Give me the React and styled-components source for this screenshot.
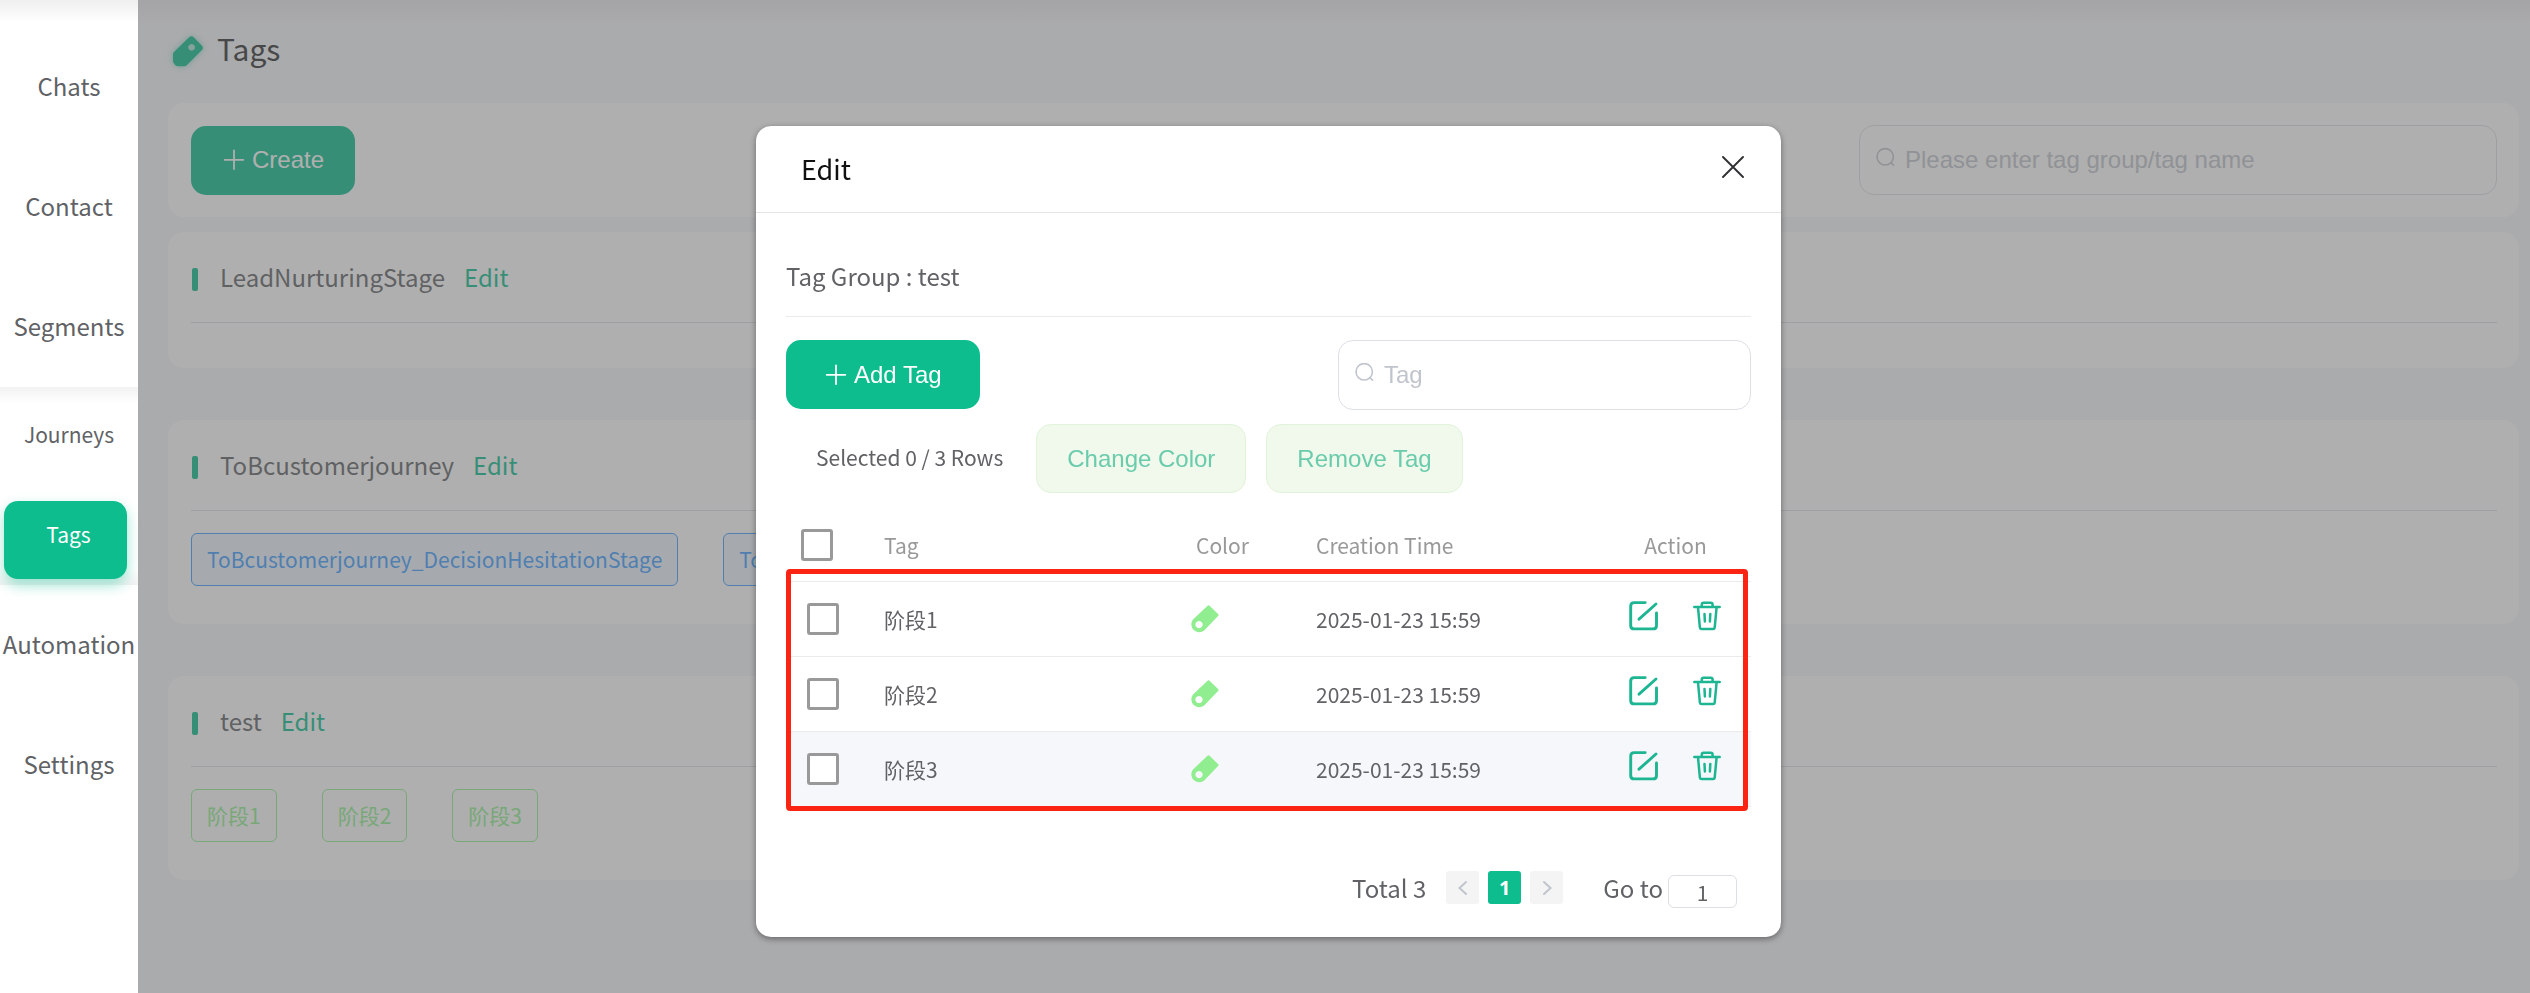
import React from 'react';
import styled, { createGlobalStyle, css } from 'styled-components';

const GREEN = '#0dbd8e';
const INK = '#606266';
const SANS = '"Noto Sans CJK SC", sans-serif';
const ARIAL = '"Liberation Sans", Arial, sans-serif';

const GlobalStyle = createGlobalStyle`
  *, *::before, *::after { box-sizing: border-box; }
  body { margin: 0; background: #f5f6fa; color: ${INK}; font-family: ${SANS}; font-size: 24px; line-height: 36px; }
  button, input { font: inherit; color: inherit; margin: 0; }
  button { cursor: pointer; border: 0; background: none; padding: 0; }
  a { color: inherit; text-decoration: none; }
  h1, h2, h3, p { margin: 0; font-size: inherit; font-weight: 400; }
  svg { display: block; flex: none; }
`;

const Page = styled.div`
  display: flex;
  min-height: 100vh;
`;

const Sidebar = styled.nav`
  position: relative;
  z-index: 20;
  flex: none;
  width: 138px;
  padding-top: 27px;
  background: linear-gradient(#efefef, #fff 22px) #fff;
`;

const NavLink = styled.a`
  display: flex;
  align-items: center;
  justify-content: center;
  height: 120px;
  padding-bottom: 2px;
`;

const SubMenu = styled.div`
  height: 198px;
  font-size: 21px;
  background: linear-gradient(#f2f2f2, transparent 16px), linear-gradient(transparent 182px, #f2f2f2);
`;

const SubItem = styled.div`
  height: 99px;
  padding: ${(p) => (p.$active ? '15px 11px 6px 4px' : '0')};
`;

const SubLink = styled.a`
  display: flex;
  align-items: center;
  justify-content: center;
  height: 100%;
  padding-bottom: 5px;
  ${(p) =>
    p.$active &&
    css`
      padding: 0 0 13px 6px;
      color: #fff;
      background: ${GREEN};
      border-radius: 14px;
      box-shadow: 0 6px 14px rgba(13, 189, 142, 0.4);
    `}
`;

const Main = styled.main`
  flex: 1;
  min-width: 0;
  padding: 0 11px 0 30px;
  background: linear-gradient(#e9e9ee, transparent 24px);
`;

const PageTitle = styled.header`
  display: flex;
  align-items: center;
  gap: 13px;
  height: 103px;
  padding: 0 4px;
  color: #303133;

  h1 { padding-bottom: 8px; font-size: 30px; }
  svg { filter: drop-shadow(0 0 3px rgba(13, 189, 142, 0.5)); }
`;

const Card = styled.section`
  padding: 0 22px 0 23px;
  background: #fff;
  border-radius: 16px;
`;

const ToolCard = styled(Card)`
  display: flex;
  align-items: center;
  justify-content: space-between;
  height: 114px;
  margin-bottom: 15px;
`;

const GroupList = styled.div`
  display: flex;
  flex-direction: column;
  gap: 52px;
`;

const GroupHead = styled.div`
  display: flex;
  align-items: center;
  height: 91px;
  border-bottom: 1px solid #dcdfe6;

  &::before {
    content: '';
    width: 6px;
    height: 23px;
    margin: 5px 22px 0 1px;
    background: ${GREEN};
    border-radius: 2px;
  }
`;

const EditLink = styled.a`
  margin-left: 19px;
  color: ${GREEN};
`;

const ChipRow = styled.div`
  display: flex;
  gap: 45px;
  padding: 22px 0 23px;
`;

const chipTones = {
  blue: css`color: #409eff; background: #ecf5ff;`,
  green: css`color: #90ee90; background: #fafdfb;`,
};

const Chip = styled.span`
  margin-bottom: 15px;
  padding: 0 15px;
  height: 53px;
  line-height: 50px;
  font-size: 21px;
  white-space: nowrap;
  border: 1px solid currentColor;
  border-radius: 6px;
  ${(p) => chipTones[p.$tone]}
`;

const Button = styled.button`
  display: flex;
  align-items: center;
  justify-content: center;
  gap: 6px;
  height: 69px;
  padding: 0 ${(p) => (p.$wide ? 38 : 31)}px;
  font-family: ${ARIAL};
  white-space: nowrap;
  color: #fff;
  background: ${GREEN};
  border-radius: 15px;
`;

const SoftButton = styled(Button)`
  padding: 0 30px;
  color: #6acbad;
  background: #f0f9eb;
  border: 1px solid #e1f3d8;
`;

const SearchBox = styled.label`
  display: flex;
  align-items: center;
  gap: 6px;
  width: ${(p) => p.$width};
  height: 70px;
  padding: 0 15px;
  color: #c0c4cc;
  background: #fff;
  border: 1px solid #dcdfe6;
  border-radius: 15px;

  input {
    flex: 1;
    min-width: 0;
    padding: 0;
    color: ${INK};
    font-family: ${ARIAL};
    border: 0;
    outline: 0;
    background: none;
  }
  input::placeholder { color: #c0c4cc; opacity: 1; }
`;

const Overlay = styled.div`
  position: fixed;
  inset: 0;
  z-index: 10;
  display: flex;
  align-items: flex-start;
  justify-content: center;
  padding: 126px 0 0 7px;
  background: rgba(96, 96, 96, 0.5);
`;

const Dialog = styled.div`
  width: 1025px;
  max-width: 100%;
  background: #fff;
  border-radius: 15px;
  box-shadow: 0 2px 6px rgba(0, 0, 0, 0.4);
`;

const DialogHead = styled.header`
  display: flex;
  align-items: center;
  justify-content: space-between;
  height: 87px;
  padding: 0 37px 0 45px;
  color: #111;
  border-bottom: 1px solid #e4e4e4;

  h2 { font-size: 27px; }
  button { padding-bottom: 4px; }
`;

const DialogBody = styled.div`
  padding: 30px 30px 29px;
`;

const GroupName = styled.p`
  padding-bottom: 7px;
  line-height: 66px;
  border-bottom: 1px solid #ebebeb;
`;

const ToolRow = styled.div`
  display: flex;
  justify-content: space-between;
  margin: 23px 0 14px;
`;

const SelectionRow = styled.div`
  display: flex;
  align-items: center;
  gap: 20px;
  margin-bottom: 16px;
  padding-left: 30px;
  font-size: 21px;

  p { margin-right: 13px; padding-bottom: 3px; }
  button { font-size: 24px; }
`;

const TableWrap = styled.div`
  position: relative;
`;

const Highlight = styled.div`
  position: absolute;
  top: 60px;
  right: 3px;
  bottom: -4px;
  left: 0;
  border: 5px solid #fb2413;
  border-radius: 4px;
  pointer-events: none;
`;

const Table = styled.table`
  width: 100%;
  table-layout: fixed;
  border-collapse: separate;
  border-spacing: 0;
  font-size: 21px;
  text-align: left;

  th, td {
    padding: 0 15px;
    font-weight: 400;
    border-bottom: 1px solid #ebebeb;
  }
  th { height: 73px; color: #999; }
  th:nth-child(3) { padding-left: 20px; }
  th:last-child { text-align: center; }
  td { height: 75px; }
  td:first-child { padding-left: 21px; }
  td:last-child { padding: 0 2px 7px 0; }
`;

const Row = styled.tr`
  background: ${(p) => (p.$hover ? '#f5f7fa' : '#fff')};
`;

const Checkbox = styled.input.attrs({ type: 'checkbox' })`
  display: block;
  appearance: none;
  width: 32px;
  height: 32px;
  background: #fff;
  border: 3px solid #999;
  border-radius: 3px;

  &:checked { background: ${GREEN}; border-color: ${GREEN}; }
`;

const Actions = styled.div`
  display: flex;
  justify-content: center;
  gap: 34px;
  color: #1db592;
`;

const Pagination = styled.div`
  display: flex;
  align-items: flex-start;
  justify-content: flex-end;
  height: 37px;
  margin-top: 64px;
  padding-right: 14px;
  line-height: 34px;
`;

const Pages = styled.div`
  display: flex;
  gap: 9px;
  margin: 0 40px 0 20px;
`;

const PageButton = styled.button`
  display: flex;
  align-items: center;
  justify-content: center;
  width: 33px;
  height: 33px;
  font-family: "Open Sans", ${SANS};
  font-size: 20px;
  font-weight: 700;
  color: ${(p) => (p.$current ? '#fff' : '#c0c4cc')};
  background: ${(p) => (p.$current ? GREEN : '#f4f4f5')};
  border-radius: 3px;
`;

const GoTo = styled.label`
  display: flex;
  align-items: flex-start;
  gap: 5px;

  input {
    width: 69px;
    height: 33px;
    margin-top: 4px;
    padding: 0;
    font-size: 21px;
    text-align: center;
    background: #fff;
    border: 1px solid #dcdfe6;
    border-radius: 6px;
  }
`;

const PlusIcon = () => (
  <svg width="24" height="24" viewBox="0 0 24 24" fill="none" stroke="currentColor" strokeWidth="1.8" strokeLinecap="round" aria-hidden="true">
    <path d="M12 2.5v18.5M2.7 11.8h18.6" />
  </svg>
);

const SearchIcon = () => (
  <svg width="24" height="24" viewBox="0 0 24 24" fill="none" stroke="currentColor" strokeWidth="1.6" strokeLinecap="round" aria-hidden="true">
    <circle cx="10.2" cy="8.8" r="8.2" />
    <path d="M16 14.6l2.6 2.6" />
  </svg>
);

const CloseIcon = () => (
  <svg width="22" height="22" viewBox="0 0 22 22" fill="none" stroke="#303133" strokeWidth="1.9" strokeLinecap="round" aria-hidden="true">
    <path d="M1 1l20 20M21 1L1 21" />
  </svg>
);

const TitleTagIcon = () => (
  <svg width="32" height="31" viewBox="0 0 32 31" aria-hidden="true">
    <path
      fill={GREEN}
      fillRule="evenodd"
      d="M17.4 1.1Q19.5 -.5 21.4 1.1L30.2 10Q31.6 11.9 30.2 13.7L15 28.9Q13.8 30.2 12 30.2H5.8Q4.4 30.2 3.4 29.2L2 27.6Q1 26.6 1 25V18Q1 16.8 2 15.9ZM19.6 8a3.4 3.4 0 1 0 .01 0Z"
    />
  </svg>
);

const ColorTagIcon = () => (
  <svg width="29" height="29" viewBox="0 0 29 29" role="img" aria-label="Light green">
    <path
      fill="#90ee90"
      fillRule="evenodd"
      d="M16.8 .5Q17.5 -.2 18.3 .6L27.3 9.3Q27.9 10 27.3 10.7L13.2 25.4A7.9 7.9 0 0 1 2 14.4ZM8 16a3.6 3.6 0 1 0 .01 0Z"
    />
  </svg>
);

const EditIcon = () => (
  <svg width="30" height="30" viewBox="0 0 30 30" fill="none" stroke="currentColor" strokeWidth="2.9" strokeLinecap="round" aria-hidden="true">
    <path d="M16.2 1.6H5.2Q1.7 1.6 1.7 5.1V24.4Q1.7 27.9 5.2 27.9H24Q27.5 27.9 27.5 24.4V12M27 3L10 18.2" />
  </svg>
);

const TrashIcon = () => (
  <svg width="28" height="30" viewBox="0 0 28 30" fill="none" stroke="currentColor" strokeWidth="2.5" strokeLinecap="round" strokeLinejoin="round" aria-hidden="true">
    <path d="M1.3 6H26.7M8.8 5.6V3.6Q8.8 1.7 10.7 1.7H17.7Q19.6 1.7 19.6 3.6V5.6M5 6.4L6.9 26.6Q7.1 28.1 8.6 28.1H20Q21.5 28.1 21.7 26.6L23.6 6.4M11.5 13L11.9 20.4M17.3 13L16.9 20.4" />
  </svg>
);

const ArrowIcon = ({ next }) => (
  <svg width="12" height="16" viewBox="0 0 12 16" fill="none" stroke="currentColor" strokeWidth="2" strokeLinecap="round" aria-hidden="true">
    <path d={next ? 'M3 2L9.5 8L3 14' : 'M9 2L2.5 8L9 14'} />
  </svg>
);

const groups = [
  { name: 'LeadNurturingStage', tone: 'blue', tags: [] },
  {
    name: 'ToBcustomerjourney',
    tone: 'blue',
    tags: ['ToBcustomerjourney_DecisionHesitationStage', 'To'],
  },
  { name: 'test', tone: 'green', tags: ['阶段1', '阶段2', '阶段3'] },
];

const rows = ['阶段1', '阶段2', '阶段3'].map((name) => ({ name, created: '2025-01-23 15:59' }));

const Search = ({ width, placeholder }) => (
  <SearchBox $width={width}>
    <SearchIcon />
    <input type="text" placeholder={placeholder} aria-label={placeholder} />
  </SearchBox>
);

function Navigation() {
  return (
    <Sidebar>
      <NavLink href="#chats">Chats</NavLink>
      <NavLink href="#contact">Contact</NavLink>
      <NavLink href="#segments">Segments</NavLink>
      <SubMenu>
        <SubItem>
          <SubLink href="#journeys">Journeys</SubLink>
        </SubItem>
        <SubItem $active>
          <SubLink href="#tags" $active aria-current="page">Tags</SubLink>
        </SubItem>
      </SubMenu>
      <NavLink href="#automation">Automation</NavLink>
      <NavLink href="#settings">Settings</NavLink>
    </Sidebar>
  );
}

function TagTable() {
  return (
    <TableWrap>
      <Table>
        <colgroup>
          <col width="83" />
          <col />
          <col width="125" />
          <col width="299" />
          <col width="151" />
        </colgroup>
        <thead>
          <tr>
            <th><Checkbox aria-label="Select all" /></th>
            <th>Tag</th>
            <th>Color</th>
            <th>Creation Time</th>
            <th>Action</th>
          </tr>
        </thead>
        <tbody>
          {rows.map((row, i) => (
            <Row key={row.name} $hover={i === 2}>
              <td><Checkbox aria-label={`Select ${row.name}`} /></td>
              <td>{row.name}</td>
              <td><ColorTagIcon /></td>
              <td>{row.created}</td>
              <td>
                <Actions>
                  <button type="button" aria-label={`Edit ${row.name}`}><EditIcon /></button>
                  <button type="button" aria-label={`Delete ${row.name}`}><TrashIcon /></button>
                </Actions>
              </td>
            </Row>
          ))}
        </tbody>
      </Table>
      <Highlight />
    </TableWrap>
  );
}

function EditDialog() {
  return (
    <Overlay>
      <Dialog role="dialog" aria-modal="true" aria-labelledby="dialog-title">
        <DialogHead>
          <h2 id="dialog-title">Edit</h2>
          <button type="button" aria-label="Close"><CloseIcon /></button>
        </DialogHead>
        <DialogBody>
          <GroupName>Tag Group : test</GroupName>
          <ToolRow>
            <Button type="button" $wide><PlusIcon />Add Tag</Button>
            <Search width="413px" placeholder="Tag" />
          </ToolRow>
          <SelectionRow>
            <p>Selected 0 / 3 Rows</p>
            <SoftButton type="button">Change Color</SoftButton>
            <SoftButton type="button">Remove Tag</SoftButton>
          </SelectionRow>
          <TagTable />
          <Pagination>
            <span>Total 3</span>
            <Pages>
              <PageButton type="button" aria-label="Previous page"><ArrowIcon /></PageButton>
              <PageButton type="button" $current>1</PageButton>
              <PageButton type="button" aria-label="Next page"><ArrowIcon next /></PageButton>
            </Pages>
            <GoTo>
              Go to
              <input type="text" defaultValue="1" />
            </GoTo>
          </Pagination>
        </DialogBody>
      </Dialog>
    </Overlay>
  );
}

export default function App() {
  return (
    <>
      <GlobalStyle />
      <Page>
        <Navigation />
        <Main>
          <PageTitle>
            <TitleTagIcon />
            <h1>Tags</h1>
          </PageTitle>
          <ToolCard>
            <Button type="button"><PlusIcon />Create</Button>
            <Search width="638px" placeholder="Please enter tag group/tag name" />
          </ToolCard>
          <GroupList>
            {groups.map((group) => (
              <Card key={group.name}>
                <GroupHead>
                  <h3>{group.name}</h3>
                  <EditLink href="#edit">Edit</EditLink>
                </GroupHead>
                <ChipRow>
                  {group.tags.map((tag) => (
                    <Chip key={tag} $tone={group.tone}>{tag}</Chip>
                  ))}
                </ChipRow>
              </Card>
            ))}
          </GroupList>
        </Main>
        <EditDialog />
      </Page>
    </>
  );
}
